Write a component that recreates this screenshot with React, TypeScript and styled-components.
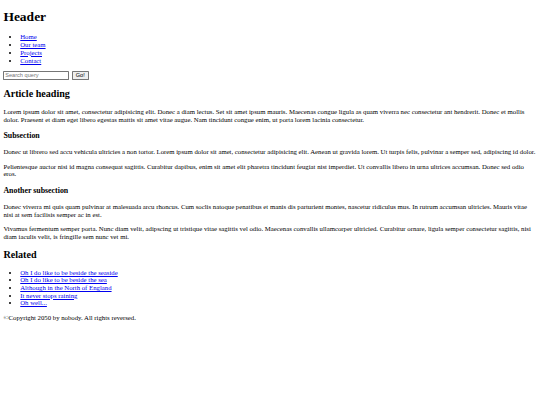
import * as React from "react";
import styled, { createGlobalStyle } from "styled-components";

const GlobalStyle = createGlobalStyle`
  html, body {
    margin: 0;
    padding: 0;
    background: #fff;
  }
`;

// the reference is a plain 1280px wide page shown at 540px
const Page = styled.div`
  zoom: 0.421875;
  width: 1280px;
  box-sizing: border-box;
  display: flow-root;
  padding: 0 8px;
  font-family: "Liberation Serif", "Times New Roman", serif;
  font-size: 16px;
  line-height: 1.14;
  color: #000;
`;

const Title = styled.h1`
  font-size: 32px;
  font-weight: bold;
  margin: 21.44px 0;
`;

const Heading = styled.h2`
  font-size: 24px;
  font-weight: bold;
  margin: 19.92px 0;
`;

const SubHeading = styled.h3`
  font-size: 18.72px;
  font-weight: bold;
  margin: 18.72px 0;
`;

const Para = styled.p`
  margin: 16px 0;
`;

const LinkList = styled.ul`
  list-style: disc;
  margin: 16px 0;
  padding-left: 40px;
`;

const Link = styled.a`
  color: #0000ee;
  text-decoration: underline;
`;

const SearchForm = styled.form`
  display: flex;
  align-items: center;
  gap: 6px;
`;

const SearchInput = styled.input`
  font-family: "Liberation Sans", Arial, sans-serif;
  font-size: 13.33px;
  width: 156px;
  padding: 1px 2px;
  border: 1px solid #767676;
  border-radius: 2px;
  &::placeholder {
    color: #757575;
  }
`;

const GoButton = styled.button`
  font-family: "Liberation Sans", Arial, sans-serif;
  font-size: 13.33px;
  padding: 1px 7px;
  background: #efefef;
  border: 1px solid #767676;
  border-radius: 2px;
  color: #000;
`;

const navItems = ["Home", "Our team", "Projects", "Contact"];

const related = [
  "Oh I do like to be beside the seaside",
  "Oh I do like to be beside the sea",
  "Although in the North of England",
  "It never stops raining",
  "Oh well...",
];

const LinkItems = (props: { items: string[] }) => (
  <LinkList>
    {props.items.map((item, index) => (
      <li key={index}>
        <Link href="#">{item}</Link>
      </li>
    ))}
  </LinkList>
);

const App: React.FC = () => {
  return (
    <>
      <GlobalStyle />
      <Page>
        <header>
          <Title>Header</Title>
          <nav>
            <LinkItems items={navItems} />
            <SearchForm onSubmit={(e) => e.preventDefault()}>
              <SearchInput type="search" placeholder="Search query" />
              <GoButton type="submit">Go!</GoButton>
            </SearchForm>
          </nav>
        </header>

        <article>
          <Heading>Article heading</Heading>
          <Para>
            Lorem ipsum dolor sit amet, consectetur adipisicing elit. Donec a diam lectus. Set sit
            amet ipsum mauris. Maecenas congue ligula as quam viverra nec consectetur ant hendrerit.
            Donec et mollis dolor. Praesent et diam eget libero egestas mattis sit amet vitae augue.
            Nam tincidunt congue enim, ut porta lorem lacinia consectetur.
          </Para>
          <SubHeading>Subsection</SubHeading>
          <Para>
            Donec ut librero sed accu vehicula ultricies a non tortor. Lorem ipsum dolor sit amet,
            consectetur adipisicing elit. Aenean ut gravida lorem. Ut turpis felis, pulvinar a
            semper sed, adipiscing id dolor.
          </Para>
          <Para>
            Pelientesque auctor nisi id magna consequat sagittis. Curabitur dapibus, enim sit amet
            elit pharetra tincidunt feugiat nist imperdiet. Ut convallis libero in urna ultrices
            accumsan. Donec sed odio eros.
          </Para>
          <SubHeading>Another subsection</SubHeading>
          <Para>
            Donec viverra mi quis quam pulvinar at malesuada arcu rhoncus. Cum soclis natoque
            penatibus et manis dis parturient montes, nascetur ridiculus mus. In rutrum accumsan
            ultricies. Mauris vitae nisi at sem facilisis semper ac in est.
          </Para>
          <Para>
            Vivamus fermentum semper porta. Nunc diam velit, adipscing ut tristique vitae sagittis
            vel odio. Maecenas convallis ullamcorper ultricied. Curabitur ornare, ligula semper
            consectetur sagittis, nisi diam iaculis velit, is fringille sem nunc vet mi.
          </Para>
        </article>

        <aside>
          <Heading>Related</Heading>
          <LinkItems items={related} />
        </aside>

        <footer>
          <Para>©Copyright 2050 by nobody. All rights reversed.</Para>
        </footer>
      </Page>
    </>
  );
};

export default App;
